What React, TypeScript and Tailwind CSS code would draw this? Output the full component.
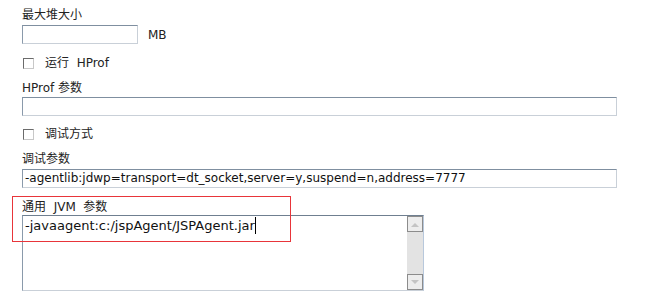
import React from 'react';

const font = { fontFamily: '"DejaVu Sans", "Noto Sans CJK SC", sans-serif' };

function Box({ width, children }: { width: string; children?: React.ReactNode }) {
  return (
    <div
      className={`${width} h-[19px] bg-white border border-t-[#7f8fa0] border-l-[#8a9aab] border-b-[#c9d0d8] border-r-[#c9d0d8] px-[2px] text-[12px] leading-[17px] text-[#111] whitespace-nowrap overflow-hidden`}
    >
      {children}
    </div>
  );
}

function Check({ label }: { label: string }) {
  return (
    <div className="flex items-center h-[16px] text-[12px] text-[#222]">
      <span className="ml-[1px] w-[11px] h-[11px] border border-t-[#6b6b6b] border-l-[#6b6b6b] border-b-[#c8c8c8] border-r-[#c8c8c8] bg-white" />
      <span className="ml-[11px]">{label}</span>
    </div>
  );
}

export default function App() {
  return (
    <div className="relative w-[650px] h-[293px] bg-white overflow-hidden" style={font}>
      <div className="flex flex-col pl-[22px] pt-[7px] text-[12px] text-[#222]">
        <div className="h-[16px] leading-[16px]">最大堆大小</div>
        <div className="mt-[1px] flex items-center">
          <Box width="w-[116px]" />
          <span className="ml-[10px] mt-[2px]">MB</span>
        </div>

        <div className="mt-[11px]">
          <Check label={'运行\u00a0\u00a0HProf'} />
        </div>

        <div className="mt-[9px] h-[16px] leading-[16px]">HProf 参数</div>
        <div className="mt-[1px]">
          <Box width="w-[595px]" />
        </div>

        <div className="mt-[10px]">
          <Check label="调试方式" />
        </div>

        <div className="mt-[9px] h-[16px] leading-[16px]">调试参数</div>
        <div className="mt-[2px]">
          <Box width="w-[595px]">-agentlib:jdwp=transport=dt_socket,server=y,suspend=n,address=7777</Box>
        </div>

        <div className="mt-[11px] h-[16px] leading-[16px]">{'通用\u00a0\u00a0JVM\u00a0\u00a0参数'}</div>
        <div className="flex w-[402px] h-[76px] bg-white border border-t-[#6f7f90] border-l-[#8a9aab] border-b-[#c9d0d8] border-r-[#b8c8dc]">
          <div className="flex-1 px-[2px] pt-[1px] text-[13px] leading-[17px] text-[#111] whitespace-nowrap">
            -javaagent:c:/jspAgent/JSPAgent.jar<span className="inline-block align-top w-[1px] h-[17px] bg-black" />
          </div>
          <div className="w-[16px] flex flex-col bg-[#e3e3e3]">
            <div className="w-[16px] h-[16px] border border-[#8c8c8c] bg-[#ededed] flex items-center justify-center">
              <svg width="8" height="5" viewBox="0 0 8 5"><path d="M0 5 L4 1 L8 5 Z" fill="#c4c4c4" /></svg>
            </div>
            <div className="flex-1" />
            <div className="w-[16px] h-[16px] border border-[#8c8c8c] bg-[#ededed] flex items-center justify-center">
              <svg width="8" height="5" viewBox="0 0 8 5"><path d="M0 0 L8 0 L4 4 Z" fill="#c4c4c4" /></svg>
            </div>
          </div>
        </div>
      </div>

      <div className="absolute left-[12px] top-[196px] w-[279px] h-[46px] border border-[#e8353a]" />
    </div>
  );
}
